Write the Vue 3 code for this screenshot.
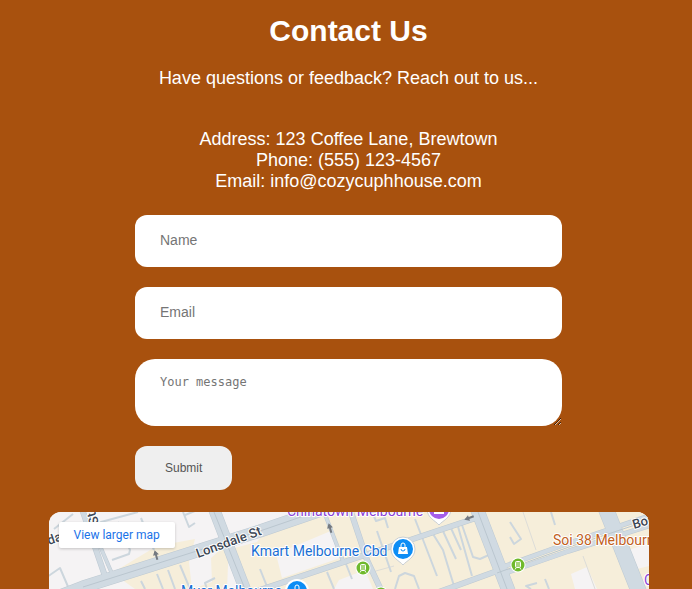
<script setup>
import { ref } from 'vue'

const name = ref('')
const email = ref('')
const message = ref('')

const blocks = [
  'M68 58 L108 34 L146 27 L140 50 L143 77 L86 77 L72 67 Z',
  'M143 77 L163 70 L162 46 L180 30 L178 77 Z',
  'M174 0 L600 0 L600 77 L196 77 L178 38 L208 30 L214 22 L195 20 Z',
]
const plots = [
  'M170 0 L264 0 L206 20 L180 22 Z',
  'M227 42 L284 18 L291 46 L233 66 Z',
  'M285 77 L290 68 L316 58 L324 77 Z',
  'M522 62 L538 55 L548 77 L526 77 Z',
  'M580 38 L600 31 L600 54 L588 57 Z',
]
const lanes = [
  'M-2 65 L11 56 L20 77',
  'M5 17 L24 2',
  'M49 15 L52 10 L89 0',
  'M69 10 L81 38 L80 42 L63 48',
  'M92 6 L105 38',
  'M134 0 L140 15 L146 11 M136 3 L151 -3',
  'M92 69 L96 77 M108 62 L114 77 M119 58 L126 77 M131 53 L141 77',
  'M158 77 L156 71 L166 66',
  'M211 57 L219 77',
  'M278 60 L285 77 M297 52 L303 67',
  'M324 2 L327 9 L336 6 L339 16',
  'M328 19 L342 60',
  'M366 7 L388 64 M384 22 L394 38 L405 74',
  'M393 17 L407 47 M401 14 L412 38 M408 11 L423 64',
  'M412 10 L424 45 L431 47 L442 42',
  'M346 77 L350 64 L356 61 L365 64 L370 77',
  'M461 10 L472 27 L465 32 L461 25',
  'M502 0 L506 13',
  'M482 77 L477 74 L488 71 M496 67 L500 77',
]
const boundaries = ['M474 0 L487 38 M534 44 L546 77 M316 62 L345 54']
const roads = [
  { d: 'M-20 96 L34 75 L151 38 L211 19 L275 -3', w: 13 },
  { d: 'M33 -3 L57 67', w: 6 },
  { d: 'M48 27 L64 64', w: 4 },
  { d: 'M165 -3 L197 80', w: 12 },
  { d: 'M205 80 L301 48 L355 30 L427 6', w: 6 },
  { d: 'M274 -3 L294 49', w: 4 },
  { d: 'M301 -3 L318 48 L333 80', w: 6 },
  { d: 'M428 -3 L460 80', w: 14 },
  { d: 'M390 80 L448 59', w: 6 },
  { d: 'M448 57 L520 31 L603 3', w: 5 },
  { d: 'M448 64 L520 39 L603 13', w: 5 },
  { d: 'M557 -3 L590 80', w: 16 },
]
const seams = [
  'M34 75 L151 38 L211 19 L275 -3',
  'M165 0 L196 77',
  'M429 0 L458 77',
  'M448 61 L520 35 L601 8',
]
const arrows = [
  'translate(107 43) rotate(-16)',
  'translate(281 16) rotate(-16)',
  'translate(420 6) rotate(-110)',
]
const stops = [
  [314, 56],
  [469, 53],
  [332, 82],
]
</script>

<template>
  <main class="contact">
    <h1>Contact Us</h1>
    <p class="intro">Have questions or feedback? Reach out to us...</p>
    <address>
      <span>Address: 123 Coffee Lane, Brewtown</span>
      <span>Phone: (555) 123-4567</span>
      <span>Email: info@cozycuphhouse.com</span>
    </address>

    <form @submit.prevent>
      <input v-model="name" type="text" placeholder="Name" aria-label="Name" />
      <input v-model="email" type="email" placeholder="Email" aria-label="Email" />
      <textarea v-model="message" placeholder="Your message" aria-label="Your message"></textarea>
      <button type="submit">Submit</button>
    </form>

    <section class="map" aria-label="Map">
      <svg viewBox="0 0 600 77" preserveAspectRatio="xMinYMin slice">
        <rect width="600" height="77" fill="#f5f3f4" />
        <path v-for="d in blocks" :key="d" :d="d" fill="#f6eeda" />
        <path v-for="d in plots" :key="d" :d="d" fill="#f5f3f4" />
        <path v-for="d in boundaries" :key="d" :d="d" fill="none" stroke="#dcdcd8" />
        <g fill="none" stroke="#ccd6dd" stroke-width="2" stroke-linejoin="round">
          <path v-for="d in lanes" :key="d" :d="d" />
        </g>
        <g fill="none" stroke-linejoin="round">
          <path v-for="r in roads" :key="r.d" :d="r.d" stroke="#bdc9d2" :stroke-width="r.w" />
          <path v-for="r in roads" :key="r.d" :d="r.d" stroke="#d0dae2" :stroke-width="r.w - 1" />
          <path v-for="d in seams" :key="d" :d="d" stroke="#bac6cf" stroke-width="1" />
        </g>
        <path
          v-for="a in arrows"
          :key="a"
          :transform="a"
          d="M0 -5 L3 0 L1 0 L1 5 L-1 5 L-1 0 L-3 0 Z"
          fill="#747980"
        />

        <g v-for="s in stops" :key="s[0]" :transform="`translate(${s[0]} ${s[1]})`">
          <circle r="7.5" fill="#ffffff" />
          <circle r="6.5" fill="#6fb92c" />
          <rect x="-2.5" y="-3.5" width="5" height="6" rx="1" fill="#a9d57c" stroke="#ffffff" />
          <path d="M-3 4.5 L-2 3 M3 4.5 L2 3" stroke="#ffffff" />
        </g>

        <g transform="translate(354 37)">
          <path d="M0 16 C-3 12 -12 9 -12 0 A12 12 0 0 1 12 0 C12 9 3 12 0 16 Z" fill="#ffffff" stroke="#c9cfd4" stroke-width="1" />
          <circle r="10" fill="#0d8df5" />
          <path d="M-4 -2 H4 L5 5 H-5 Z" fill="#ffffff" />
          <path d="M-2 -2 V-4 A2 2 0 0 1 2 -4 V-2" fill="none" stroke="#ffffff" />
          <path d="M-2 0 A2 2 0 0 0 2 0" fill="none" stroke="#0d8df5" />
        </g>
        <g transform="translate(248 79)">
          <circle r="12" fill="#ffffff" />
          <circle r="10" fill="#0d8df5" />
          <path d="M-4 -2 H4 L5 5 H-5 Z" fill="#ffffff" />
          <path d="M-2 -2 V-4 A2 2 0 0 1 2 -4 V-2" fill="none" stroke="#ffffff" />
        </g>
        <g transform="translate(390 -3)">
          <path d="M0 16 C-3 12 -12 9 -12 0 A12 12 0 0 1 12 0 C12 9 3 12 0 16 Z" fill="#ffffff" stroke="#c9cfd4" stroke-width="1" />
          <circle r="10" fill="#a55eea" />
          <path d="M-5 4 H5" stroke="#ffffff" stroke-width="2" />
        </g>

        <g class="labels">
          <text class="street" transform="translate(149 46) rotate(-20)">Lonsdale St</text>
          <text class="street" transform="translate(0 33) rotate(-19)">dale St</text>
          <text class="street" transform="translate(50 11) rotate(-108)">St</text>
          <text class="street" transform="translate(585 17) rotate(-17)">Bourke St</text>
          <text class="culture" x="238" y="4">Chinatown Melbourne</text>
          <text class="shop" x="202" y="44">Kmart Melbourne Cbd</text>
          <text class="shop" x="132" y="84">Myer Melbourne</text>
          <text class="food" x="504" y="33">Soi 38 Melbourne</text>
          <text class="culture" x="595" y="73">Club</text>
        </g>
      </svg>
      <a class="larger" href="#map">View larger map</a>
    </section>
  </main>
</template>

<style>
body {
  margin: 0;
  background: #a8510e;
}
</style>

<style scoped>
.contact {
  box-sizing: border-box;
  display: flex;
  flex-direction: column;
  align-items: center;
  min-height: 100vh;
  padding: 13px 0 0 5px;
  color: #ffffff;
  font-family: "Liberation Sans", Arial, sans-serif;
  font-size: 18px;
  line-height: 21px;
  text-align: center;
}

h1 {
  margin: 0;
  font-size: 30px;
  line-height: 35px;
}

.intro {
  margin: 20px 0 40px;
}

address {
  display: flex;
  flex-direction: column;
  font-style: normal;
}

form {
  box-sizing: border-box;
  display: flex;
  flex-direction: column;
  align-items: flex-start;
  gap: 20px;
  width: 100%;
  max-width: 467px;
  margin: 23px 0 22px;
  padding: 0 20px;
}

input,
textarea {
  box-sizing: border-box;
  width: 100%;
  border: 0;
  background: #ffffff;
  color: #333333;
}

input {
  height: 52px;
  padding: 0 25px 2px;
  border-radius: 12px;
  font-family: "Liberation Sans", Arial, sans-serif;
  font-size: 14px;
}

textarea {
  display: block;
  height: 67px;
  padding: 15px 25px;
  border-radius: 20px;
  font-family: "DejaVu Sans Mono", monospace;
  font-size: 12px;
  line-height: 16px;
}

input::placeholder,
textarea::placeholder {
  color: #757575;
}

button {
  height: 44px;
  padding: 0 30px;
  border: 0;
  border-radius: 12px;
  background: #efefef;
  color: #555555;
  font-family: "Liberation Sans", Arial, sans-serif;
  font-size: 12px;
}

.map {
  position: relative;
  flex: 1 0 77px;
  width: 100%;
  max-width: 600px;
  overflow: hidden;
  border-radius: 12px 12px 0 0;
  background: #f5f3f4;
}

.map svg {
  display: block;
  width: 100%;
  height: 100%;
}

.larger {
  position: absolute;
  top: 10px;
  left: 10px;
  padding: 0 15px;
  border-radius: 2px;
  background: #ffffff;
  box-shadow: 0 1px 3px rgba(0, 0, 0, 0.2);
  color: #1a73e8;
  font-family: Roboto, sans-serif;
  font-size: 12px;
  line-height: 26px;
  text-decoration: none;
}

.labels text {
  font-family: Roboto, sans-serif;
  font-size: 14px;
  paint-order: stroke;
  stroke: #ffffff;
  stroke-width: 2px;
  stroke-linejoin: round;
}

.labels .street {
  font-size: 13px;
  font-weight: 500;
  fill: #3c4654;
}

.shop {
  fill: #1a6fd4;
}

.food {
  fill: #c2601c;
}

.culture {
  fill: #8a3fd6;
}
</style>
